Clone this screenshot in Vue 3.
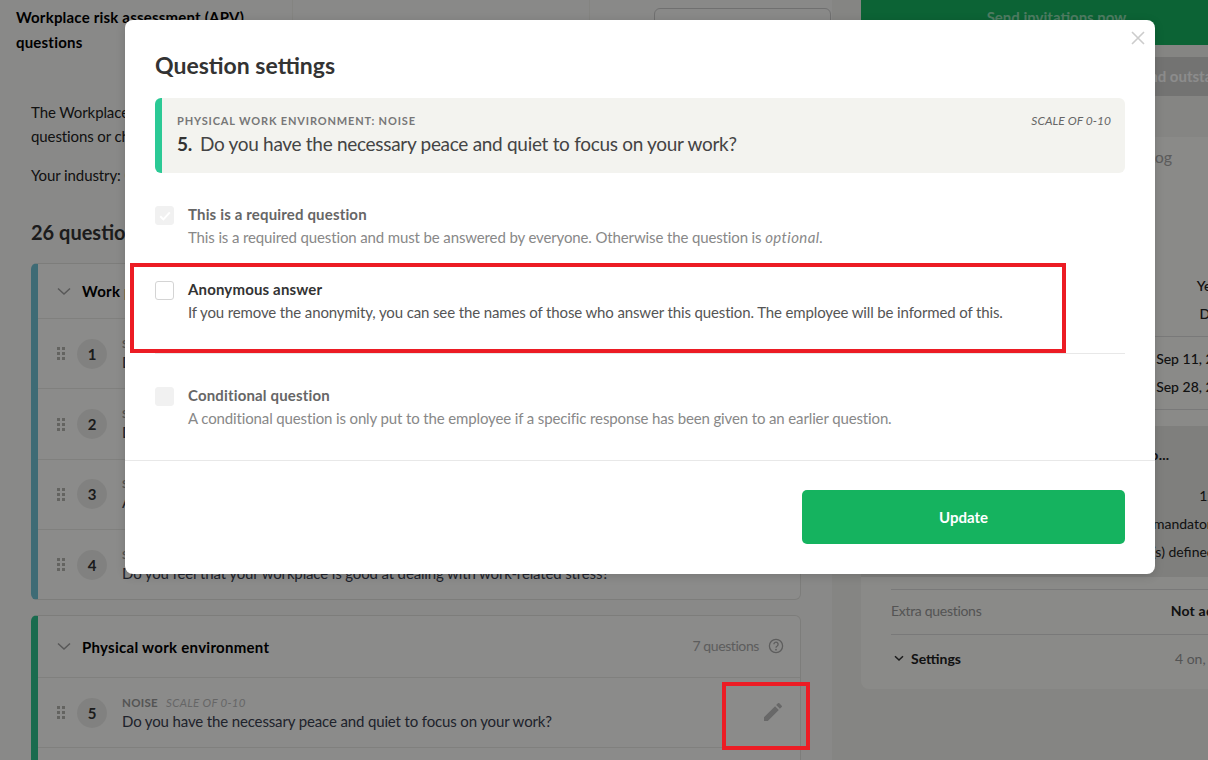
<script setup>
const groupOne = [
  { n: 1, label: 'Stress', text: 'Do you experience a high level of stress at work?' },
  { n: 2, label: 'Stress', text: 'Do you have enough time to complete your work tasks?' },
  { n: 3, label: 'Stress', text: 'Are you able to disconnect from work in your free time?' },
  { n: 4, label: 'Stress', text: 'Do you feel that your workplace is good at dealing with work-related stress?' }
]
const infoRows = [
  { label: 'Anonymous', value: 'Yes, all' },
  { label: 'Language', value: 'Dansk' }
]
const dateRows = [
  { label: 'Start date', value: 'Sep 11, 2023' },
  { label: 'End date', value: 'Sep 28, 2023' }
]
const summaryRows = [
  { label: 'Questions', value: '12/26' },
  { label: 'Required', value: 'mandatory (3)' },
  { label: 'Conditions', value: 'Condition(s) defined: 12' }
]
const dots = [[1, 1], [6, 1], [1, 6], [6, 6], [1, 11], [6, 11]]
</script>

<template>
  <div class="screen">
    <div class="page">
      <main class="main">
        <header class="topbar">
          <h1 class="page-title">Workplace risk assessment (APV) questions</h1>
          <div class="topbar-mid"></div>
          <div class="topbar-end"><div class="ghost-button"></div></div>
        </header>

        <section class="intro">
          <p>The Workplace risk assessment contains a set of standard</p>
          <p>questions or chapters that you can adjust.</p>
          <p class="industry">Your industry: Other</p>
          <h2 class="count">26 questions</h2>
        </section>

        <section class="group group-blue">
          <div class="group-head">
            <svg class="chev" width="14" height="9" viewBox="0 0 14 9"><path d="M1 1.5 7 7l6-5.5" /></svg>
            <strong>Work pressure</strong>
          </div>
          <div v-for="q in groupOne" :key="q.n" class="row">
            <svg class="grip" width="8" height="13" viewBox="0 0 8 13">
              <rect v-for="d in dots" :key="d.join()" :x="d[0] - 1" :y="d[1] - 1" width="3" height="3" />
            </svg>
            <span class="num">{{ q.n }}</span>
            <div class="q">
              <div class="q-label">{{ q.label }}</div>
              <div class="q-text">{{ q.text }}</div>
            </div>
          </div>
        </section>

        <section class="group group-green">
          <div class="group-head head-tall">
            <svg class="chev" width="14" height="9" viewBox="0 0 14 9"><path d="M1 1.5 7 7l6-5.5" /></svg>
            <strong>Physical work environment</strong>
            <span class="group-count">7 questions</span>
            <svg class="help" width="16" height="16" viewBox="0 0 16 16">
              <circle cx="8" cy="8" r="6.6" />
              <path d="M5.9 6.3a2.1 2.1 0 1 1 3.3 1.7c-.8.5-1.2.9-1.2 1.8" />
              <circle class="help-dot" cx="8" cy="11.7" r=".9" />
            </svg>
          </div>
          <div class="row">
            <svg class="grip" width="8" height="13" viewBox="0 0 8 13">
              <rect v-for="d in dots" :key="d.join()" :x="d[0] - 1" :y="d[1] - 1" width="3" height="3" />
            </svg>
            <span class="num">5</span>
            <div class="q">
              <div class="q-label">NOISE <em>SCALE OF 0-10</em></div>
              <div class="q-text">Do you have the necessary peace and quiet to focus on your work?</div>
            </div>
            <svg class="pencil" width="24" height="24" viewBox="0 0 24 24">
              <path d="M3 17.25V21h3.75L17.81 9.94l-3.75-3.75L3 17.25zM20.71 7.04a1 1 0 0 0 0-1.41l-2.34-2.34a1 1 0 0 0-1.41 0l-1.83 1.83 3.75 3.75 1.83-1.83z" />
            </svg>
          </div>
          <div class="row"></div>
        </section>
      </main>

      <aside class="side">
        <div class="send">Send invitations now</div>
        <div class="side-card">
          <div class="side-top">
            <div class="outstanding">Send outstanding</div>
            <div class="log">Log</div>
          </div>
          <div class="info-block">
            <div v-for="r in infoRows" :key="r.label" class="kv">
              <span>{{ r.label }}</span><b>{{ r.value }}</b>
            </div>
          </div>
          <div class="date-block">
            <div v-for="r in dateRows" :key="r.label" class="kv">
              <span>{{ r.label }}</span><b>{{ r.value }}</b>
            </div>
          </div>
          <div class="summary">
            <div class="summary-title">Workplace risk assessment (APV) questio...</div>
            <div v-for="r in summaryRows" :key="r.label" class="kv">
              <span>{{ r.label }}</span><b class="plain">{{ r.value }}</b>
            </div>
          </div>
          <div class="extra"><span>Extra questions</span><b>Not added</b></div>
          <div class="settings">
            <span class="settings-name">
              <svg class="chev-small" width="10" height="7" viewBox="0 0 10 7"><path d="M1 1.2 5 5l4-3.8" /></svg>
              Settings
            </span>
            <span class="settings-value">4 on, 1 off</span>
          </div>
        </div>
      </aside>
    </div>

    <div class="overlay">
      <div class="modal">
        <svg class="close" width="14" height="14" viewBox="0 0 14 14"><path d="M1 1l12 12M13 1 1 13" /></svg>
        <div class="modal-body">
          <h2 class="modal-title">Question settings</h2>
          <div class="qbox">
            <div class="qbox-top">
              <span class="qbox-label">PHYSICAL WORK ENVIRONMENT: NOISE</span>
              <em class="qbox-scale">SCALE OF 0-10</em>
            </div>
            <div class="qbox-text"><b>5.</b>Do you have the necessary peace and quiet to focus on your work?</div>
          </div>

          <div class="opt opt-first disabled">
            <span class="box box-off">
              <svg width="12" height="10" viewBox="0 0 12 10"><path d="M1.2 5.2 4.4 8.4 10.8 1.4" /></svg>
            </span>
            <div>
              <div class="opt-title">This is a required question</div>
              <div class="opt-desc">This is a required question and must be answered by everyone. Otherwise the question is <em>optional.</em></div>
            </div>
          </div>

          <div class="opt opt-second">
            <span class="box"></span>
            <div>
              <div class="opt-title">Anonymous answer</div>
              <div class="opt-desc">If you remove the anonymity, you can see the names of those who answer this question. The employee will be informed of this.</div>
            </div>
          </div>

          <div class="opt opt-third disabled">
            <span class="box box-off"></span>
            <div>
              <div class="opt-title">Conditional question</div>
              <div class="opt-desc">A conditional question is only put to the employee if a specific response has been given to an earlier question.</div>
            </div>
          </div>
        </div>
        <div class="modal-foot">
          <button class="update" type="button">Update</button>
        </div>
      </div>
    </div>

    <div class="mark mark-option"></div>
    <div class="mark mark-pencil"></div>
  </div>
</template>

<style scoped>
.screen {
  position: relative;
  width: 1208px;
  height: 760px;
  overflow: hidden;
  background: #f2f2ee;
  font-family: Lato, "Open Sans", sans-serif;
  font-size: 15px;
  color: #222;
}
.page {
  display: flex;
  width: 1280px;
}
.main {
  width: 832px;
  flex: none;
  background: #fafaf8;
  height: 760px;
  overflow: hidden;
}
.topbar {
  display: flex;
  height: 73px;
}
.page-title {
  width: 293px;
  box-sizing: border-box;
  margin: 0;
  padding: 5px 30px 0 16px;
  font-size: 15px;
  line-height: 25px;
  font-weight: 700;
  letter-spacing: 0.2px;
  color: #000;
  border-right: 1px solid #f0f0ec;
}
.topbar-mid {
  width: 296px;
  border-right: 1px solid #f0f0ec;
}
.topbar-end {
  flex: 1;
  padding: 8px 1px 0 64px;
}
.ghost-button {
  height: 34px;
  border: 1px solid #ccc;
  border-radius: 6px;
}
.intro {
  padding: 27px 0 0 31px;
}
.intro p {
  margin: 0;
  line-height: 24px;
  color: #222;
  letter-spacing: -0.1px;
}
.intro .industry {
  margin-top: 15px;
}
.count {
  margin: 32px 0 0;
  font-size: 20px;
  line-height: 26px;
  font-weight: 700;
  color: #333;
}
.group {
  box-sizing: border-box;
  width: 770px;
  margin-left: 31px;
  background: #fdfdfb;
  border: 1px solid #e4e4e0;
  border-left: 7px solid;
  border-radius: 6px;
}
.group-blue {
  margin-top: 18px;
  height: 337px;
  border-left-color: #72c3d6;
}
.group-green {
  margin-top: 15px;
  border-left-color: #2ec48f;
}
.group-head {
  display: flex;
  align-items: center;
  height: 54px;
  padding-left: 19px;
  color: #000;
}
.group-head strong {
  letter-spacing: 0.28px;
  margin-left: -1px;
}
.head-tall {
  height: 61px;
  padding-right: 16px;
}
.chev {
  flex: none;
  margin-right: 12px;
  fill: none;
  stroke: #a0a0a0;
  stroke-width: 1.5;
}
.group-count {
  margin-left: auto;
  padding-bottom: 2px;
  font-size: 14px;
  letter-spacing: -0.4px;
  color: #aaa;
}
.help {
  margin-left: 9px;
  margin-bottom: 2px;
  fill: none;
  stroke: #aaa;
  stroke-width: 1.3;
}
.help-dot {
  fill: #aaa;
  stroke: none;
}
.row {
  position: relative;
  display: flex;
  align-items: center;
  height: 70.4px;
  box-sizing: border-box;
  padding-left: 19px;
  border-top: 1px solid #e9e9e5;
}
.grip {
  flex: none;
  fill: #b4b4b0;
}
.num {
  flex: none;
  display: flex;
  align-items: center;
  justify-content: center;
  width: 30px;
  height: 30px;
  margin-left: 12px;
  border-radius: 50%;
  background: #ececea;
  font-size: 15px;
  font-weight: 700;
  color: #333;
}
.q {
  margin-left: 15px;
  padding-top: 1px;
}
.q-label {
  font-size: 11.5px;
  line-height: 15px;
  margin-bottom: 1px;
  letter-spacing: 0.3px;
  color: #999;
  font-weight: 700;
}
.q-label em {
  margin-left: 5px;
  font-weight: 400;
  color: #bbb;
}
.q-text {
  font-size: 15px;
  line-height: 21px;
  letter-spacing: -0.14px;
  color: #3a4050;
}
.pencil {
  position: absolute;
  right: 15px;
  top: 22px;
  fill: #bdbdbd;
}
.side {
  width: 407px;
  flex: none;
  margin-left: 29px;
}
.send {
  height: 45px;
  box-sizing: border-box;
  padding-top: 8px;
  text-align: center;
  background: #17b562;
  color: #8fe0b3;
  font-weight: 700;
  border-radius: 0 0 4px 4px;
  width: 391px;
}
.side-card {
  height: 644px;
  box-sizing: border-box;
  padding: 0 30px;
  background: #fbfbf8;
  border-radius: 0 0 8px 8px;
}
.side-top {
  height: 132px;
  margin: 0 -30px;
  padding-top: 12px;
  box-sizing: border-box;
  background: #f3f3ef;
}
.outstanding {
  height: 39px;
  line-height: 39px;
  padding-left: 272px;
  background: #d1d1cf;
  color: #fff;
  font-weight: 700;
}
.log {
  height: 40px;
  line-height: 40px;
  margin-top: 41px;
  padding-left: 286px;
  background: #fbfbf8;
  color: #a8a8a8;
  font-size: 16px;
}
.kv {
  display: flex;
  justify-content: space-between;
  align-items: center;
  height: 28px;
  font-size: 14px;
}
.kv span {
  color: #777;
}
.kv b {
  color: #222;
  font-weight: 500;
}
.kv b.plain {
  font-weight: 400;
}
.info-block {
  margin-top: 94px;
  padding-bottom: 9px;
  border-bottom: 1px solid #ddd;
}
.date-block {
  padding: 7px 0 9px;
  border-bottom: 1px solid #ddd;
}
.summary {
  margin: 16px -30px 12px;
  padding: 15px 30px 0;
  height: 151px;
  box-sizing: border-box;
  background: #e8e8e4;
}
.summary-title {
  font-weight: 700;
  font-size: 14px;
  line-height: 28px;
  letter-spacing: 0.28px;
  margin-bottom: 12px;
  color: #222;
}
.extra {
  display: flex;
  justify-content: space-between;
  align-items: center;
  height: 46px;
  padding-bottom: 3px;
  box-sizing: border-box;
  border-top: 1px solid #ddd;
  border-bottom: 1px solid #ddd;
  font-size: 14px;
  letter-spacing: -0.3px;
  color: #999;
}
.extra b {
  color: #222;
  letter-spacing: 0.2px;
}
.settings {
  display: flex;
  justify-content: space-between;
  align-items: center;
  height: 47px;
  box-sizing: border-box;
  font-size: 14px;
}
.settings-name {
  display: flex;
  align-items: center;
  gap: 7px;
  padding-left: 3px;
  font-weight: 700;
  color: #222;
}
.chev-small {
  fill: none;
  stroke: #333;
  stroke-width: 1.5;
}
.settings-value {
  color: #999;
  font-size: 14px;
}
.overlay {
  position: absolute;
  inset: 0;
  box-sizing: border-box;
  padding: 20px 53px 186px 125px;
  background: rgba(0, 0, 0, 0.45);
}
.modal {
  position: relative;
  display: flex;
  flex-direction: column;
  height: 100%;
  background: #fff;
  border-radius: 8px;
  color: #333;
  box-shadow: 0 2px 10px rgba(0, 0, 0, 0.15);
}
.close {
  position: absolute;
  top: 11px;
  right: 10px;
  fill: none;
  stroke: #ccc;
  stroke-width: 1.6;
}
.modal-body {
  flex: none;
  height: 441px;
  box-sizing: border-box;
  padding: 30px 30px 0;
  border-bottom: 1px solid #e8e8e8;
}
.modal-title {
  margin: 0;
  font-size: 23px;
  line-height: 31px;
  font-weight: 700;
  color: #333;
}
.qbox {
  box-sizing: border-box;
  height: 75px;
  margin-top: 17px;
  padding: 15px 14px 0 15px;
  background: #f3f3ef;
  border-left: 7px solid #2bc995;
  border-radius: 6px;
}
.qbox-top {
  display: flex;
  justify-content: space-between;
  line-height: 16px;
  font-size: 12px;
}
.qbox-label {
  font-size: 11px;
  font-weight: 700;
  letter-spacing: 0.85px;
  color: #777;
}
.qbox-scale {
  color: #666;
  letter-spacing: 0.05px;
}
.qbox-text {
  font-size: 19px;
  line-height: 29px;
  letter-spacing: -0.3px;
  color: #444;
}
.qbox-text b {
  margin-right: 8px;
  color: #333;
}
.opt {
  display: flex;
  gap: 14px;
}
.opt-first {
  margin-top: 30px;
}
.opt-second {
  margin-top: 29px;
  height: 75px;
  border-bottom: 1px solid #e8e8e8;
}
.opt-third {
  margin-top: 30px;
}
.box {
  flex: none;
  display: flex;
  align-items: center;
  justify-content: center;
  box-sizing: border-box;
  width: 19px;
  height: 19px;
  margin-top: 3px;
  border: 1px solid #d4d4d4;
  border-radius: 3px;
  background: #fff;
}
.box-off {
  background: #f1f1f1;
  border-color: #f1f1f1;
}
.box svg {
  fill: none;
  stroke: #fff;
  stroke-width: 2;
}
.opt-title {
  font-weight: 700;
  font-size: 15px;
  line-height: 23px;
  letter-spacing: 0.16px;
  color: #333;
}
.opt-desc {
  font-size: 15px;
  line-height: 23px;
  letter-spacing: -0.13px;
  color: #555;
}
.opt-desc em {
  letter-spacing: 0.4px;
}
.disabled .opt-title {
  color: #666;
}
.disabled .opt-desc {
  color: #888;
}
.modal-foot {
  flex: 1;
  display: flex;
  justify-content: flex-end;
  align-items: flex-start;
  padding: 29px 30px 0;
}
.update {
  width: 323px;
  height: 54px;
  border: 0;
  border-radius: 5px;
  background: #15b35f;
  color: #fff;
  font: 700 15px Lato, "Open Sans", sans-serif;
}
.mark {
  position: absolute;
  box-sizing: border-box;
  border: 4px solid #ec1c24;
}
.mark-option {
  left: 130px;
  top: 263px;
  width: 936px;
  height: 90px;
}
.mark-pencil {
  left: 722px;
  top: 682px;
  width: 88px;
  height: 68px;
}
</style>
